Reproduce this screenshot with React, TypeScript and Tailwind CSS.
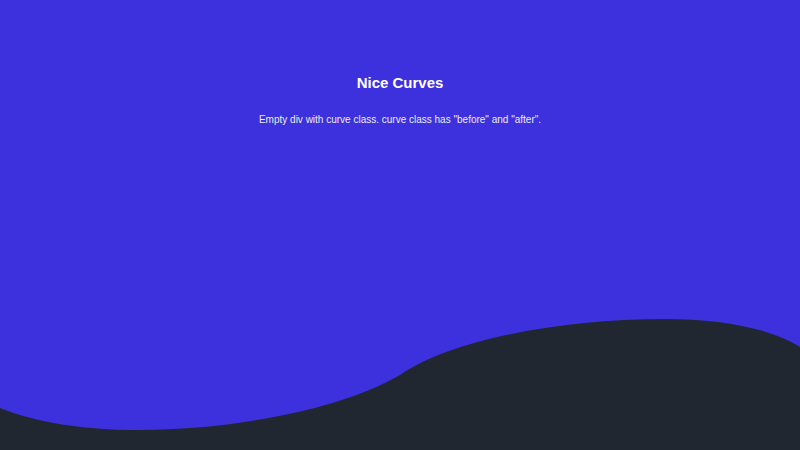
import React from "react";

export default function App() {
  return (
    <div
      className="relative h-[450px] w-full overflow-hidden bg-[#3c31dd]"
      style={{ fontFamily: '"Liberation Sans", Arial, sans-serif' }}
    >
      <svg
        className="absolute inset-0 h-full w-full"
        viewBox="0 0 800 450"
        preserveAspectRatio="none"
        aria-hidden="true"
      >
        <path
          d="M0,408 C35,422 80,430 140,430 C230,430 340,410 400,375 C450,340 560,319 665,319 C720,319 770,328 800,347 L800,450 L0,450 Z"
          fill="#212730"
        />
      </svg>
      <div className="relative flex flex-col items-center pt-[73px] text-white">
        <h1 className="text-[15px] leading-[20px] font-bold">Nice Curves</h1>
        <p className="mt-[20px] text-[10px] leading-[14px] text-[#ececf5]">
          Empty div with curve class. curve class has "before" and "after".
        </p>
      </div>
    </div>
  );
}
